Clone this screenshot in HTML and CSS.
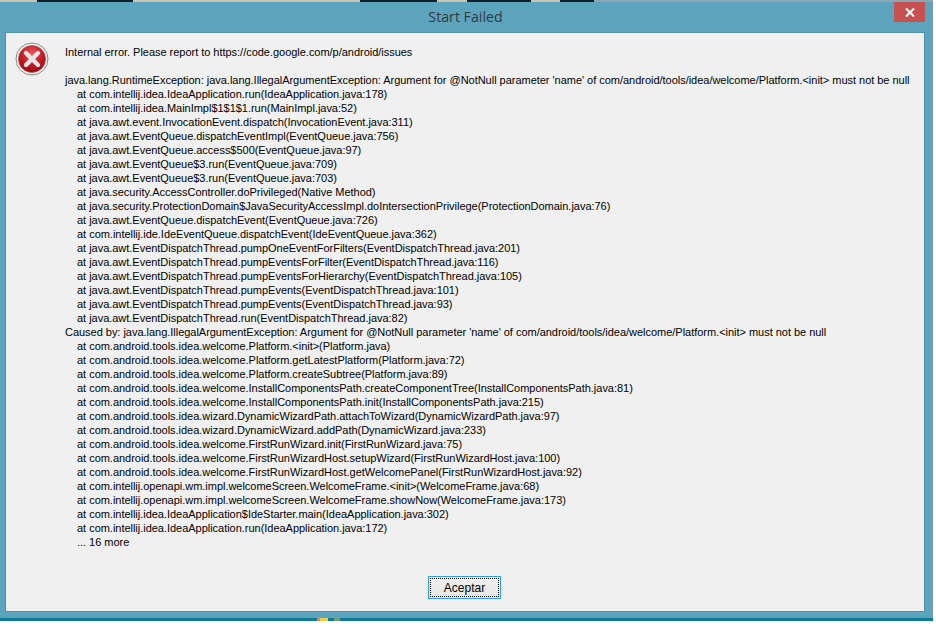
FILE: index.html
```html
<!DOCTYPE html>
<html lang="en">
<head>
<meta charset="utf-8">
<title>Start Failed</title>
<link rel="stylesheet" href="styles.css">
</head>
<body>
<div class="screen">
  <div class="desk-top">
    <span class="seg tan w37"></span><span class="seg dark w96"></span><span class="seg tan w227"></span><span class="seg dark w77"></span><span class="seg tan w30"></span><span class="seg dark w64"></span><span class="seg tan w29"></span><span class="seg dark w34"></span><span class="seg greyish"></span>
  </div>
  <div class="window">
    <div class="titlebar">
      <span class="title">Start Failed</span>
      <button class="close" aria-label="Close"><svg width="10" height="9" viewBox="0 0 10 9"><path d="M1 .5 5 4.5 9 .5M1 8.5 5 4.5 9 8.5" fill="none" stroke="#fff" stroke-width="2"/></svg></button>
    </div>
    <div class="panel">
      <div class="content">
        <svg class="icon" width="34" height="34" viewBox="0 0 34 34">
          <defs>
            <radialGradient id="red" cx="50%" cy="30%" r="75%">
              <stop offset="0" stop-color="#e8565a"/>
              <stop offset="0.55" stop-color="#c41a22"/>
              <stop offset="1" stop-color="#8c0a10"/>
            </radialGradient>
          </defs>
          <circle cx="17" cy="17" r="16" fill="#f4f4f4" stroke="#8a8a8a"/>
          <circle cx="17" cy="17" r="13.6" fill="url(#red)" stroke="#a05a5c" stroke-width=".6"/>
          <path d="M11 11 23 23M23 11 11 23" stroke="#e6e6e6" stroke-width="4.4" stroke-linecap="round" fill="none"/>
        </svg>
        <div class="log">
          <div class="line">Internal error. Please report to https://code.google.com/p/android/issues</div>
          <div class="line">&nbsp;</div>
          <div class="line">java.lang.RuntimeException: java.lang.IllegalArgumentException: Argument for @NotNull parameter 'name' of com/android/tools/idea/welcome/Platform.&lt;init&gt; must not be null</div>
          <div class="line frame">at com.intellij.idea.IdeaApplication.run(IdeaApplication.java:178)</div>
          <div class="line frame">at com.intellij.idea.MainImpl$1$1$1.run(MainImpl.java:52)</div>
          <div class="line frame">at java.awt.event.InvocationEvent.dispatch(InvocationEvent.java:311)</div>
          <div class="line frame">at java.awt.EventQueue.dispatchEventImpl(EventQueue.java:756)</div>
          <div class="line frame">at java.awt.EventQueue.access$500(EventQueue.java:97)</div>
          <div class="line frame">at java.awt.EventQueue$3.run(EventQueue.java:709)</div>
          <div class="line frame">at java.awt.EventQueue$3.run(EventQueue.java:703)</div>
          <div class="line frame">at java.security.AccessController.doPrivileged(Native Method)</div>
          <div class="line frame">at java.security.ProtectionDomain$JavaSecurityAccessImpl.doIntersectionPrivilege(ProtectionDomain.java:76)</div>
          <div class="line frame">at java.awt.EventQueue.dispatchEvent(EventQueue.java:726)</div>
          <div class="line frame">at com.intellij.ide.IdeEventQueue.dispatchEvent(IdeEventQueue.java:362)</div>
          <div class="line frame">at java.awt.EventDispatchThread.pumpOneEventForFilters(EventDispatchThread.java:201)</div>
          <div class="line frame">at java.awt.EventDispatchThread.pumpEventsForFilter(EventDispatchThread.java:116)</div>
          <div class="line frame">at java.awt.EventDispatchThread.pumpEventsForHierarchy(EventDispatchThread.java:105)</div>
          <div class="line frame">at java.awt.EventDispatchThread.pumpEvents(EventDispatchThread.java:101)</div>
          <div class="line frame">at java.awt.EventDispatchThread.pumpEvents(EventDispatchThread.java:93)</div>
          <div class="line frame">at java.awt.EventDispatchThread.run(EventDispatchThread.java:82)</div>
          <div class="line">Caused by: java.lang.IllegalArgumentException: Argument for @NotNull parameter 'name' of com/android/tools/idea/welcome/Platform.&lt;init&gt; must not be null</div>
          <div class="line frame">at com.android.tools.idea.welcome.Platform.&lt;init&gt;(Platform.java)</div>
          <div class="line frame">at com.android.tools.idea.welcome.Platform.getLatestPlatform(Platform.java:72)</div>
          <div class="line frame">at com.android.tools.idea.welcome.Platform.createSubtree(Platform.java:89)</div>
          <div class="line frame">at com.android.tools.idea.welcome.InstallComponentsPath.createComponentTree(InstallComponentsPath.java:81)</div>
          <div class="line frame">at com.android.tools.idea.welcome.InstallComponentsPath.init(InstallComponentsPath.java:215)</div>
          <div class="line frame">at com.android.tools.idea.wizard.DynamicWizardPath.attachToWizard(DynamicWizardPath.java:97)</div>
          <div class="line frame">at com.android.tools.idea.wizard.DynamicWizard.addPath(DynamicWizard.java:233)</div>
          <div class="line frame">at com.android.tools.idea.welcome.FirstRunWizard.init(FirstRunWizard.java:75)</div>
          <div class="line frame">at com.android.tools.idea.welcome.FirstRunWizardHost.setupWizard(FirstRunWizardHost.java:100)</div>
          <div class="line frame">at com.android.tools.idea.welcome.FirstRunWizardHost.getWelcomePanel(FirstRunWizardHost.java:92)</div>
          <div class="line frame">at com.intellij.openapi.wm.impl.welcomeScreen.WelcomeFrame.&lt;init&gt;(WelcomeFrame.java:68)</div>
          <div class="line frame">at com.intellij.openapi.wm.impl.welcomeScreen.WelcomeFrame.showNow(WelcomeFrame.java:173)</div>
          <div class="line frame">at com.intellij.idea.IdeaApplication$IdeStarter.main(IdeaApplication.java:302)</div>
          <div class="line frame">at com.intellij.idea.IdeaApplication.run(IdeaApplication.java:172)</div>
          <div class="line frame">... 16 more</div>
        </div>
      </div>
      <div class="footer">
        <button class="ok"><span class="ok-inner">Aceptar</span></button>
      </div>
    </div>
  </div>
  <div class="desk-bottom">
    <span class="dot-a"></span><span class="dot-b"></span><span class="dot-c"></span>
  </div>
</div>
</body>
</html>
```

FILE: styles.css
```css
* { box-sizing: border-box; }
html, body { margin: 0; padding: 0; background: #fff; }
body { width: 936px; height: 624px; overflow: hidden; }

.screen {
  width: 933px;
  height: 621px;
  display: flex;
  flex-direction: column;
  background: #0f7a96;
}

.desk-top { height: 2px; display: flex; flex: none; }
.seg { display: block; height: 100%; flex: none; }
.tan { background: #c9c3b4; }
.dark { background: #0d1f28; }
.greyish { flex: 1; background: #8aa7b3; }
.w37 { width: 37px; }
.w96 { width: 96px; }
.w227 { width: 227px; }
.w77 { width: 77px; }
.w30 { width: 30px; }
.w64 { width: 64px; }
.w29 { width: 29px; }
.w34 { width: 34px; }

.window {
  flex: 1;
  display: flex;
  flex-direction: column;
  background: #5ca3bd;
  border-right: 1px solid #7d96a2;
  padding: 0 7px 6px 5px;
  min-height: 0;
}

.titlebar {
  height: 30px;
  flex: none;
  display: flex;
  justify-content: center;
  align-items: center;
  position: relative;
}
.title {
  font: 14.2px/20px "Open Sans", "Noto Sans", sans-serif;
  color: #333a40;
  margin-top: -1px;
  margin-left: 1px;
}
.close {
  position: absolute;
  right: 0;
  top: 0;
  width: 31px;
  height: 20px;
  border: 0;
  padding: 0;
  background: #c75050;
  display: flex;
  align-items: center;
  justify-content: center;
}

.panel {
  flex: 1;
  display: flex;
  flex-direction: column;
  background: #f0f0f0;
  border: 1px solid #4f8ea5;
  min-height: 0;
}

.content {
  display: flex;
  align-items: flex-start;
  padding: 12px 0 0 9px;
  flex: 1;
}
.icon { flex: none; margin-right: 16px; margin-top: -3px; }
.log {
  font: 11px/14px "Liberation Sans", Arial, sans-serif;
  letter-spacing: -0.025px;
  color: #000;
  white-space: nowrap;
}
.line { height: 14px; }
.frame { padding-left: 12px; }

.footer {
  display: flex;
  justify-content: center;
  padding: 0 1px 12px 0;
}
.ok {
  width: 73px;
  height: 23px;
  padding: 1px;
  border: 1px solid #2f9df4;
  background: linear-gradient(#f0f0f0, #e5e5e5);
  font: 12px/1 "Liberation Sans", Arial, sans-serif;
  color: #000;
}
.ok-inner {
  display: flex;
  align-items: center;
  justify-content: center;
  width: 100%;
  height: 100%;
  border: 1px dotted #000;
}

.desk-bottom { height: 3px; flex: none; display: flex; padding-left: 317px; }
.dot-a { width: 3px; background: #d9875a; }
.dot-b { width: 8px; background: #f1cf45; }
.dot-c { width: 6px; margin-left: 6px; background: #6f9e74; }
```
